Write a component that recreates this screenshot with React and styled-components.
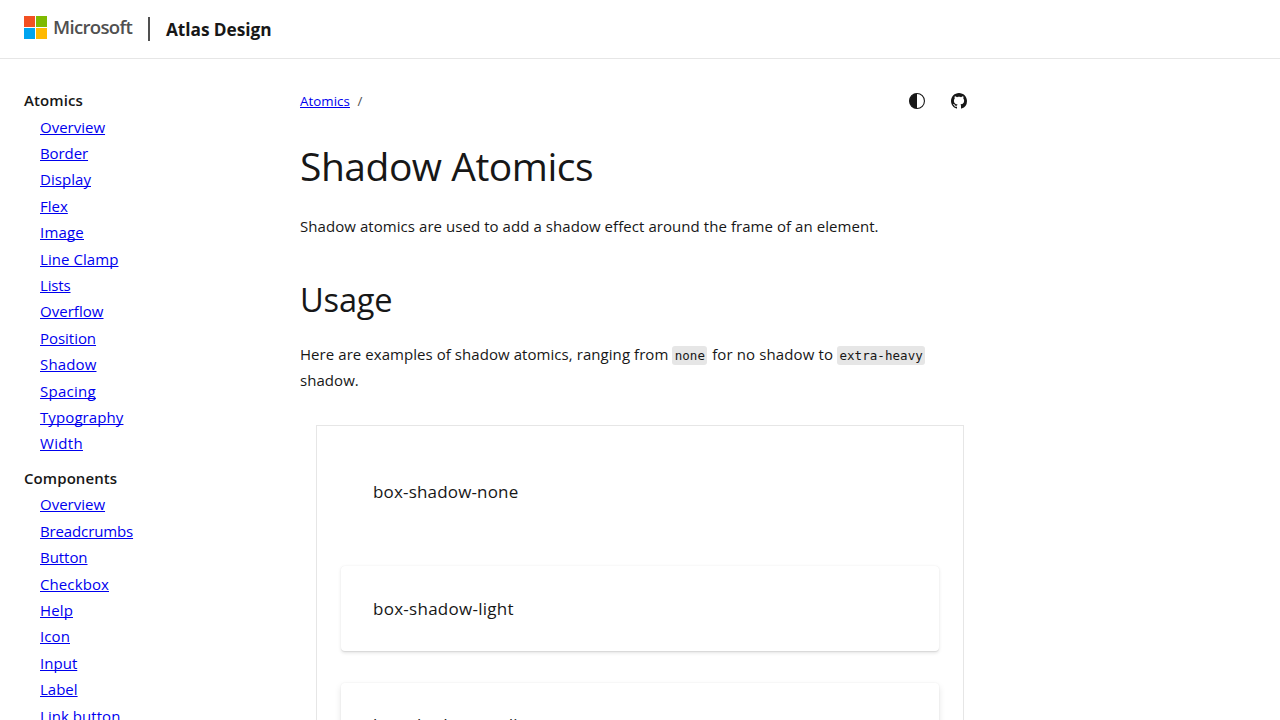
import React from 'react';
import styled, { createGlobalStyle } from 'styled-components';

const GlobalStyle = createGlobalStyle`
  *, *::before, *::after { box-sizing: border-box; }
  html, body { margin: 0; height: 100%; overflow: hidden; }
  body {
    background: #fff;
    color: #171717;
    font-family: "Segoe UI", "Open Sans", "Noto Sans", sans-serif;
    font-size: 15px;
    line-height: 26.4px;
  }
  h1, h2, p, ul { margin: 0; padding: 0; font-weight: 400; }
`;

const Page = styled.div`
  height: 100vh;
  overflow: hidden;
  display: flex;
  flex-direction: column;
`;

const Header = styled.header`
  flex: none;
  display: flex;
  align-items: center;
  height: 59px;
  padding: 0 24px;
  border-bottom: 1px solid #e6e6e6;
`;

const Brand = styled.a`
  display: flex;
  align-items: center;
  height: 24px;
  margin-bottom: 3px;
`;

const Wordmark = styled.span`
  width: 101px;
  padding-left: 6px;
  color: #505050;
  font-size: 18.6px;
  font-weight: 600;
  line-height: 22px;
  padding-bottom: 2px;
  letter-spacing: -0.7px;
  white-space: nowrap;
`;

const Divider = styled.span`
  width: 2px;
  height: 24px;
  background: #505050;
`;

const SiteName = styled.span`
  margin-left: 16px;
  font-size: 17.3px;
  font-weight: 700;
  letter-spacing: -0.06px;
  padding-top: 3px;
`;

const Body = styled.div`
  flex: 1;
  min-height: 0;
  display: grid;
  grid-template-columns: 276px 680px;
  padding-left: 24px;
`;

const Sidebar = styled.nav`
  padding-top: 28.2px;
`;

const Group = styled.section`
  margin-bottom: 8px;
`;

const GroupTitle = styled.p`
  font-weight: 600;
  letter-spacing: 0.08px;
`;

const LinkList = styled.ul`
  list-style: none;
  padding-left: 16px;
`;

const Link = styled.a`
  color: #0000ee;
  text-decoration: underline 1px;
  text-underline-offset: 1px;
  text-decoration-skip-ink: none;
  letter-spacing: ${(p) => p.$track || 0}px;
`;

const Main = styled.main`
  padding-top: 22px;
`;

const TopRow = styled.div`
  display: flex;
  align-items: center;
  justify-content: space-between;
  height: 40px;
`;

const Breadcrumbs = styled.div`
  display: flex;
  gap: 7.5px;
  font-size: 13.3px;
  color: #505050;
`;

const Actions = styled.div`
  display: flex;
`;

const IconButton = styled.button`
  display: flex;
  align-items: center;
  justify-content: center;
  width: 42px;
  height: 40px;
  padding: 0;
  border: 0;
  background: none;
  color: #171717;
`;

const Title = styled.h1`
  margin-top: 19px;
  font-size: 39px;
  line-height: 52px;
  letter-spacing: -0.49px;
`;

const Subtitle = styled.h2`
  margin-top: 39px;
  font-size: 32.6px;
  line-height: 44px;
  letter-spacing: -0.18px;
`;

const Paragraph = styled.p`
  margin-top: ${(p) => p.$gap}px;
  letter-spacing: 0.06px;
`;

const Code = styled.code`
  margin: 0 ${(p) => p.$after || 0}px 0 0;
  padding: 2px 2.4px;
  border-radius: 3px;
  background: #e6e6e6;
  font-family: "Consolas", "DejaVu Sans Mono", monospace;
  font-size: 12.5px;
  line-height: 1;
  letter-spacing: 0.05px;
`;

const Phrase = styled.span`
  letter-spacing: 0.12px;
`;

const Example = styled.div`
  display: flex;
  flex-direction: column;
  gap: 32px;
  margin: 31px 16px 0;
  padding: 24px;
  border: 1px solid #e6e6e6;
`;

const shadows = {
  none: 'none',
  light: '0 1.6px 3.6px 0 rgba(0,0,0,.11), 0 .3px .9px 0 rgba(0,0,0,.07)',
  medium: '0 3.2px 7.2px 0 rgba(0,0,0,.11), 0 .6px 1.8px 0 rgba(0,0,0,.07)',
};

const Card = styled.div`
  height: 84.6px;
  padding: 27.4px 32px 0;
  border-radius: 4px;
  font-size: 17px;
  line-height: 29.7px;
  letter-spacing: ${(p) => p.$track}px;
  box-shadow: ${(p) => shadows[p.$shadow]};
`;

const atomics = [
  ['Overview', 0], ['Border', -0.09], ['Display', 0.05], ['Flex', 0], ['Image', 0.2],
  ['Line Clamp', 0.07], ['Lists', -0.15], ['Overflow', 0.04], ['Position', -0.04],
  ['Shadow', 0.15], ['Spacing', 0.27], ['Typography', 0.1], ['Width', 0.32],
];

const components = [
  ['Overview', 0], ['Breadcrumbs', -0.13], ['Button', -0.05], ['Checkbox', 0.1],
  ['Help', 0.13], ['Icon', 0.1], ['Input', 0.03], ['Label', 0], ['Link button', 0.05],
];

const MicrosoftLogo = () => (
  <svg width="23" height="23" viewBox="0 0 23 23" aria-hidden="true">
    <path fill="#f25022" d="M0 0h11v11H0z" />
    <path fill="#7fba00" d="M12 0h11v11H12z" />
    <path fill="#00a4ef" d="M0 12h11v11H0z" />
    <path fill="#ffb900" d="M12 12h11v11H12z" />
  </svg>
);

const ContrastIcon = () => (
  <svg width="16" height="16" viewBox="0 0 16 16" aria-hidden="true">
    <circle cx="8" cy="8" r="7.45" fill="none" stroke="currentColor" strokeWidth="1.1" />
    <path d="M8 0.5a7.5 7.5 0 0 0 0 15z" fill="currentColor" />
  </svg>
);

const GitHubIcon = () => (
  <svg width="16" height="16" viewBox="0 0 16 16" fill="currentColor" aria-hidden="true">
    <path d="M8 0C3.58 0 0 3.58 0 8c0 3.54 2.29 6.53 5.47 7.59.4.07.55-.17.55-.38 0-.19-.01-.82-.01-1.49-2.01.37-2.53-.49-2.69-.94-.09-.23-.48-.94-.82-1.13-.28-.15-.68-.52-.01-.53.63-.01 1.08.58 1.23.82.72 1.21 1.87.87 2.33.66.07-.52.28-.87.51-1.07-1.78-.2-3.64-.89-3.64-3.95 0-.87.31-1.59.82-2.15-.08-.2-.36-1.02.08-2.12 0 0 .67-.21 2.2.82.64-.18 1.32-.27 2-.27s1.36.09 2 .27c1.53-1.04 2.2-.82 2.2-.82.44 1.1.16 1.92.08 2.12.51.56.82 1.27.82 2.15 0 3.07-1.87 3.75-3.65 3.95.29.25.54.73.54 1.48 0 1.07-.01 1.93-.01 2.2 0 .21.15.46.55.38A8.01 8.01 0 0 0 16 8c0-4.42-3.58-8-8-8z" />
  </svg>
);

const NavGroup = ({ title, links }) => (
  <Group>
    <GroupTitle>{title}</GroupTitle>
    <LinkList>
      {links.map(([label, track]) => (
        <li key={label}><Link $track={track}>{label}</Link></li>
      ))}
    </LinkList>
  </Group>
);

export default function App() {
  return (
    <Page>
      <GlobalStyle />
      <Header>
        <Brand>
          <MicrosoftLogo />
          <Wordmark>Microsoft</Wordmark>
        </Brand>
        <Divider />
        <SiteName>Atlas Design</SiteName>
      </Header>
      <Body>
        <Sidebar>
          <NavGroup title="Atomics" links={atomics} />
          <NavGroup title="Components" links={components} />
        </Sidebar>
        <Main>
          <TopRow>
            <Breadcrumbs>
              <Link $track={0.06}>Atomics</Link>
              <span>/</span>
            </Breadcrumbs>
            <Actions>
              <IconButton aria-label="Theme"><ContrastIcon /></IconButton>
              <IconButton aria-label="GitHub"><GitHubIcon /></IconButton>
            </Actions>
          </TopRow>
          <Title>Shadow Atomics</Title>
          <Paragraph $gap={21}>
            Shadow atomics are used to add a shadow effect around the frame of an element.
          </Paragraph>
          <Subtitle>Usage</Subtitle>
          <Paragraph $gap={18.6}>
            Here are examples of shadow atomics, ranging from <Code $after={0.7}>none</Code>
            <Phrase> for no shadow to </Phrase>
            <Code>extra-heavy</Code> shadow.
          </Paragraph>
          <Example>
            <Card $shadow="none" $track={0.17}>box-shadow-none</Card>
            <Card $shadow="light" $track={0.27}>box-shadow-light</Card>
            <Card $shadow="medium" $track={0.17}>box-shadow-medium</Card>
          </Example>
        </Main>
      </Body>
    </Page>
  );
}
